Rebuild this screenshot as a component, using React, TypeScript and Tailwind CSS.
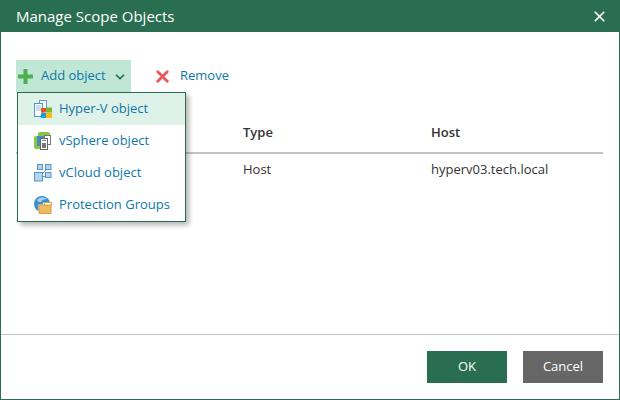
import { X, ChevronDown } from "lucide-react";

const font = "font-['Open_Sans',sans-serif]";

function HyperVIcon() {
  return (
    <svg width="18" height="18" viewBox="0 0 18 18">
      <rect x="5.5" y="0.5" width="7" height="11" fill="#fff" stroke="#5a9fd0" />
      <rect x="0.5" y="3.5" width="8" height="13" fill="#fff" stroke="#4f97cc" />
      <path d="M2 6h5M2 8h5M2 10h5" stroke="#8fbcdc" />
      <rect x="7" y="8" width="5" height="4.5" fill="#e8531f" />
      <rect x="12" y="7.5" width="6" height="5" fill="#7fb82e" />
      <rect x="7" y="13" width="5" height="5" fill="#1c9fe0" />
      <rect x="12" y="13" width="6" height="5" fill="#fdbb0f" />
    </svg>
  );
}

function VSphereIcon() {
  return (
    <svg width="18" height="18" viewBox="0 0 18 18">
      <rect x="4" y="0" width="12" height="13" rx="2" fill="#8cc63f" />
      <rect x="0" y="4" width="10" height="13" rx="2" fill="#8cc63f" />
      <rect x="3" y="4" width="8" height="10" fill="#3f8fc7" />
      <rect x="10.5" y="3.5" width="6" height="9" fill="#fff" stroke="#777" />
      <rect x="6.5" y="6.5" width="7" height="11" fill="#fff" stroke="#666" />
      <rect x="8" y="11" width="4" height="5" fill="#777" />
      <path d="M8 8.5h4" stroke="#888" />
    </svg>
  );
}

function VCloudIcon() {
  return (
    <svg width="18" height="18" viewBox="0 0 18 18">
      <path d="M6 12l6-6M9 12.5h3" stroke="#4f97cc" />
      <rect x="3.5" y="0.5" width="5" height="5" fill="#b5d4ec" stroke="#4f97cc" />
      <rect x="11.5" y="0.5" width="5.5" height="5" fill="#b5d4ec" stroke="#4f97cc" />
      <rect x="11.5" y="8.5" width="5.5" height="5" fill="#b5d4ec" stroke="#4f97cc" />
      <rect x="0.5" y="8.5" width="8" height="8.5" fill="#b5d4ec" stroke="#4f97cc" />
    </svg>
  );
}

function GroupsIcon() {
  return (
    <svg width="18" height="18" viewBox="0 0 18 18">
      <circle cx="8" cy="8" r="8" fill="#3d8fc9" />
      <path d="M3 4c3-3 7-3 10-1-3 0-5 1-6 3-2 0-3 0-4-2z" fill="#a9d2ee" />
      <path d="M4.5 8.5h4l1-2h8v11h-13z" fill="#fff" />
      <path d="M5 9h12v8.5H5z" fill="#ecbc64" stroke="#d99f3a" />
      <path d="M11 6.5h6.5V9H10z" fill="#fff" stroke="#d99f3a" />
    </svg>
  );
}

const menuItems = [
  { label: "Hyper-V object", icon: <HyperVIcon />, active: true },
  { label: "vSphere object", icon: <VSphereIcon /> },
  { label: "vCloud object", icon: <VCloudIcon /> },
  { label: "Protection Groups", icon: <GroupsIcon /> },
];

export default function App() {
  return (
    <div className={`w-[620px] h-[400px] bg-white flex flex-col border-x border-b border-[#2a6e52] ${font} text-[13px] text-[#333]`}>
      {/* title bar */}
      <div className="-mx-px h-8 shrink-0 bg-[#2a6e52] flex items-center justify-between pl-4 pr-3 text-white">
        <span className="text-[15px]">Manage Scope Objects</span>
        <X size={17} strokeWidth={2.4} />
      </div>

      <div className="flex-1 flex flex-col pl-[15px] pr-4 pt-7">
        {/* toolbar */}
        <div className="relative flex items-center h-8 text-[#0f77a8]">
          <button className="h-8 w-[115px] bg-[#c0e7d6] flex items-center pl-[2px]">
            <svg width="15" height="15" viewBox="0 0 15 15">
              <path d="M5.5 0h4v5.5H15v4H9.5V15h-4V9.5H0v-4h5.5z" fill="#4cb050" />
            </svg>
            <span className="ml-2">Add object</span>
            <ChevronDown size={14} strokeWidth={3} className="ml-[7px] mt-0.5 text-[#2a6e52]" />
          </button>
          <button className="ml-[22px] flex items-center gap-2">
            <X size={19} strokeWidth={3.6} className="text-[#e8575a]" />
            <span>Remove</span>
          </button>

          {/* dropdown */}
          <div className="absolute left-px top-8 z-10 w-[169px] h-[130px] bg-white border border-[#2a6e52] shadow-[3px_3px_5px_rgba(0,0,0,0.3)] flex flex-col">
            {menuItems.map((item) => (
              <div key={item.label} className={`h-8 shrink-0 flex items-center pl-4 gap-[7px] ${item.active ? "bg-[#dff2e9]" : ""}`}>
                {item.icon}
                <span>{item.label}</span>
              </div>
            ))}
          </div>
        </div>

        {/* table */}
        <div className="mt-[22px] grid grid-cols-[227px_188px_1fr] h-10 items-center border-b-2 border-[#c4c4c4] font-semibold">
          <span />
          <span>Type</span>
          <span>Host</span>
        </div>
        <div className="grid grid-cols-[227px_188px_1fr] h-8 items-center">
          <span />
          <span>Host</span>
          <span>hyperv03.tech.local</span>
        </div>
      </div>

      {/* footer */}
      <div className="h-[65px] shrink-0 border-t border-[#c4c4c4] flex justify-end items-start pt-4 pr-4 gap-4 text-white">
        <button className="w-20 h-8 bg-[#2a6e52]">OK</button>
        <button className="w-20 h-8 bg-[#666666]">Cancel</button>
      </div>
    </div>
  );
}
